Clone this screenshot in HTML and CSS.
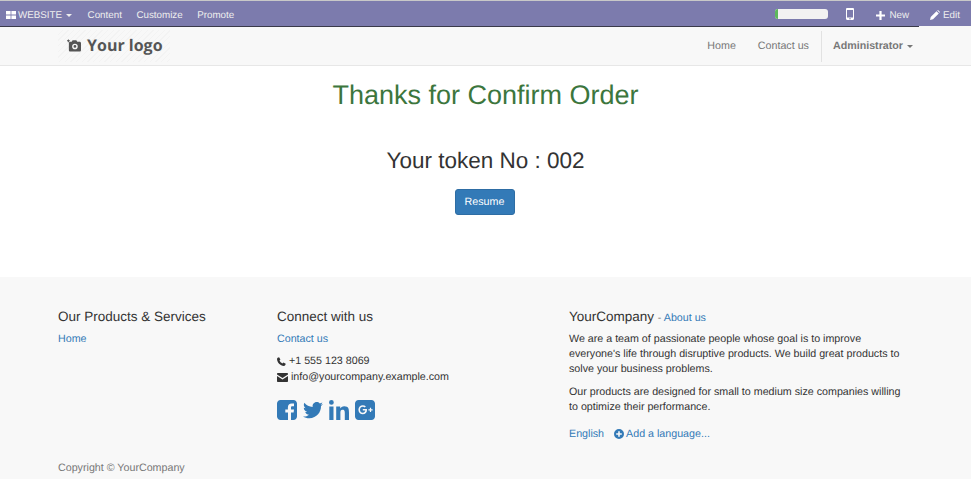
FILE: index.html
```html
<!DOCTYPE html>
<html lang="en">
<head>
<meta charset="utf-8">
<title>Thanks</title>
<link rel="stylesheet" href="styles.css">
</head>
<body>
<header class="adminbar">
  <div class="admin-left">
    <span class="admin-item brand">
      <svg class="grid-ico" viewBox="0 0 10 8" width="10" height="8"><path d="M0 0h4.600v3.600H0zM5.400 0H10v3.600H5.400zM0 4.400h4.600V8H0zM5.400 4.400H10V8H5.400z"/></svg>
      <span>WEBSITE</span> <i class="caret"></i>
    </span>
    <span class="admin-item">Content</span>
    <span class="admin-item">Customize</span>
    <span class="admin-item">Promote</span>
  </div>
  <div class="admin-right">
    <div class="progress"><div class="progress-fill"></div></div>
    <svg class="phone" viewBox="0 0 8 12" width="8" height="12"><path fill-rule="evenodd" d="M1.200 0h5.600C7.500 0 8 .5 8 1.200v9.600c0 .7-.5 1.200-1.200 1.200H1.200C.5 12 0 11.500 0 10.800V1.200C0 .5.500 0 1.200 0zM1 2v7.500h6V2zM4 10a.7.7 0 1 0 0 1.400A.7.7 0 0 0 4 10z"/></svg>
    <span class="admin-action new"><svg viewBox="0 0 9 9" width="9" height="9"><path d="M3.400 0h2.200v3.400H9v2.200H5.600V9H3.400V5.600H0V3.400h3.400z"/></svg>New</span>
    <span class="admin-action edit"><svg viewBox="0 0 10 10" width="10" height="10"><path d="M0 10l.7-3L6.500 1.200l2.300 2.300L3 9.300zM7.200.5 8 0l2 2-.5.800z"/></svg>Edit</span>
  </div>
</header>

<nav class="sitenav">
  <div class="logo">
    <svg class="cam" viewBox="0 0 15 13" width="14" height="13"><path fill-rule="evenodd" d="M5 2.500 6 1h4l1 1.500h2.500c.8 0 1.500.7 1.500 1.500v7.500c0 .8-.7 1.500-1.500 1.500h-10C2.700 13 2 12.300 2 11.500V4c0-.8.700-1.500 1.500-1.500zM8.500 4.500a3 3 0 1 0 0 6 3 3 0 0 0 0-6zM8.500 6a1.500 1.500 0 1 1 0 3 1.500 1.500 0 0 1 0-3z"/><path d="M1 0h1v1h1v1H2v1H1V2H0V1h1z"/></svg>
    <span>Your logo</span>
  </div>
  <div class="nav-right">
    <a class="nav-link">Home</a>
    <a class="nav-link">Contact us</a>
    <a class="nav-user">Administrator <i class="caret"></i></a>
  </div>
</nav>

<main class="content">
  <h1 class="thanks">Thanks for Confirm Order</h1>
  <h2 class="token">Your token No : 002</h2>
  <a class="resume">Resume</a>
</main>

<footer class="footer">
  <div class="columns">
    <section class="col-a">
      <h4 class="foot-title">Our Products &amp; Services</h4>
      <a class="link">Home</a>
    </section>
    <section class="col-b">
      <h4 class="foot-title">Connect with us</h4>
      <a class="link">Contact us</a>
      <ul class="contact">
        <li><svg viewBox="0 0 10 10" width="9" height="9"><path d="M2.300.3 3.800 2.800 2.800 3.900c.5 1.300 1.700 2.500 3.200 3.200l1.100-1 2.600 1.500C9.600 8.900 8.700 10 7.700 10 3.500 9.800.2 6.300 0 2.300 0 1.300 1.100.4 2.300.3z"/></svg>+1 555 123 8069</li>
        <li><svg viewBox="0 0 11 9" width="11" height="9"><path d="M1 0h9c.6 0 1 .4 1 1v.6L5.500 5 0 1.600V1c0-.6.400-1 1-1zM0 3l5.500 3.400L11 3v5c0 .6-.4 1-1 1H1c-.6 0-1-.4-1-1z"/></svg>info@yourcompany.example.com</li>
      </ul>
      <div class="social">
        <svg viewBox="0 0 20 20" width="20" height="20"><path d="M3.500 0h13C18.400 0 20 1.600 20 3.500v13c0 1.900-1.600 3.500-3.500 3.500H14v-7.600h2.600l.4-3H14V7.600c0-.9.300-1.400 1.500-1.400H17V3.500c-.3 0-1.200-.1-2.300-.1-2.300 0-3.800 1.400-3.800 3.900v2.100H8.300v3H11V20H3.500C1.600 20 0 18.400 0 16.500v-13C0 1.600 1.600 0 3.500 0z"/></svg>
        <svg viewBox="0 0 20 17" width="20" height="17"><path d="M20 2c-.7.300-1.500.600-2.400.7.900-.5 1.500-1.300 1.800-2.300-.8.500-1.700.8-2.600 1C16 .5 14.900 0 13.700 0c-2.600 0-4.600 2.400-4 5C6.300 4.800 3.300 3.200 1.400.8.300 2.600.8 5 2.600 6.200 2 6.200 1.300 6 .8 5.700c0 1.900 1.300 3.700 3.300 4.100-.6.200-1.200.2-1.900.1.500 1.600 2 2.800 3.800 2.800C4.300 14.100 2.200 14.700 0 14.500 1.800 15.600 4 16.300 6.300 16.300c7.600 0 11.900-6.400 11.700-12.200.8-.6 1.500-1.300 2-2.100z"/></svg>
        <svg viewBox="0 0 20 20" width="20" height="20"><path d="M.3 6.500h4.200V20H.3zM2.400 0a2.400 2.400 0 1 1 0 4.800 2.400 2.400 0 0 1 0-4.800zM7.200 6.500h4v1.900c.6-1.100 2-2.200 4.100-2.200 4.300 0 4.700 2.800 4.700 6.500V20h-4.200v-6.600c0-1.600 0-3.600-2.200-3.600s-2.200 1.700-2.200 3.500V20H7.200z"/></svg>
        <svg viewBox="0 0 20 20" width="20" height="20"><path fill-rule="evenodd" d="M3.500 0h13C18.400 0 20 1.600 20 3.500v13c0 1.900-1.600 3.500-3.500 3.500h-13C1.600 20 0 18.400 0 16.500v-13C0 1.600 1.600 0 3.500 0zM7.800 5.300C5.300 5.300 3.400 7.300 3.400 9.800s1.900 4.500 4.400 4.500c2.600 0 4.200-1.800 4.200-4.300 0-.4 0-.7-.1-1H7.800v1.500h2.500c-.2 1-1.100 2.300-2.500 2.300-1.600 0-2.800-1.300-2.800-3s1.200-3 2.800-3c.9 0 1.500.4 1.900.8l1.200-1.200c-.8-.7-1.800-1.100-3.100-1.100zM14.900 7.800v1.500h-1.500v1.200h1.500V12h1.200v-1.500h1.500V9.300h-1.500V7.800z"/></svg>
      </div>
    </section>
    <section class="col-c">
      <h4 class="foot-title company">YourCompany <small>- <a class="link">About us</a></small></h4>
      <p>We are a team of passionate people whose goal is to improve everyone's life through disruptive products. We build great products to solve your business problems.</p>
      <p>Our products are designed for small to medium size companies willing to optimize their performance.</p>
      <div class="langs">
        <a class="link">English</a>
        <a class="link add"><svg viewBox="0 0 10 10" width="10" height="10"><path fill-rule="evenodd" d="M5 0a5 5 0 1 1 0 10A5 5 0 0 1 5 0zM4.200 2.200v2H2.200v1.600h2v2h1.600v-2h2V4.200h-2v-2z"/></svg>Add a language...</a>
      </div>
    </section>
  </div>
  <div class="copyright">Copyright © YourCompany</div>
</footer>
</body>
</html>
```
FILE: styles.css
```css
* { box-sizing: border-box; }
html, body { margin: 0; padding: 0; }
body {
  width: 971px;
  height: 479px;
  overflow: hidden;
  font-family: "Liberation Sans", Arial, sans-serif;
  font-size: 10.7px;
  line-height: 15px;
  color: #333;
  background: #fff;
  text-rendering: geometricPrecision;
}
.caret {
  display: inline-block;
  width: 0;
  height: 0;
  vertical-align: middle;
  border-top: 3px solid currentColor;
  border-left: 3.500px solid transparent;
  border-right: 3.500px solid transparent;
}

/* admin bar */
.adminbar {
  height: 27px;
  display: flex;
  justify-content: space-between;
  align-items: center;
  padding-top: 3px;
  background: #7c7bad;
  border-top: 1px solid #c8c8c8;
  border-bottom: 1px solid #3a3a4a;
  color: #eee;
  font-size: 9.800px;
}
.admin-left { display: flex; align-items: center; padding-left: 6px; }
.admin-item { margin-right: 14.500px; }
.brand { display: flex; align-items: center; gap: 2px; margin-right: 15.500px; }
.brand span { margin-right: 2px; }
.grid-ico { fill: #fff; }
.admin-right { display: flex; align-items: center; align-self: stretch; }
.progress {
  width: 53px;
  height: 10px;
  margin-right: 18px;
  margin-bottom: 2px;
  background: #f2f2f2;
  border-radius: 3px;
  overflow: hidden;
}
.progress-fill { width: 3px; height: 100%; background: #5cb85c; }
.phone { fill: #fff; margin-right: 22px; margin-bottom: 2px; }
.admin-action { display: flex; align-items: center; gap: 4px; }
.admin-action svg { fill: #fff; }
.new { margin-right: 10px; }
.edit {
  width: 52px;
  align-self: stretch;
  margin-bottom: -1px;
  padding-left: 11px;
  gap: 3px;
  border-bottom: 1px solid #f8f8f8;
}

/* site nav */
.sitenav {
  height: 39px;
  display: flex;
  justify-content: space-between;
  align-items: center;
  padding: 0 58px 0 0;
  background: #f8f8f8;
  border-bottom: 1px solid #e7e7e7;
}
.logo {
  display: flex;
  align-items: center;
  gap: 6px;
  height: 32px;
  width: 112px;
  margin: 0 0 1px 58px;
  padding-left: 9px;
  color: #555;
  font-family: "Open Sans", sans-serif;
  font-weight: 700;
  font-size: 16px;
  background: repeating-linear-gradient(135deg, #f8f8f8 0 3px, #f3f3f3 3px 4px);
}
.cam { fill: #555; }
.nav-right { display: flex; align-items: center; height: 100%; color: #777; }
.nav-link { margin-right: 22px; }
.nav-link + .nav-link { margin-right: 12px; }
.nav-user { display: flex; align-items: center; gap: 4px; height: 31px; padding-left: 11px; border-left: 1px solid #e2e2e2; font-weight: 700; }

/* main */
.content { height: 211px; display: flex; flex-direction: column; align-items: center; }
.thanks { margin: 13px 0 0; font-size: 27px; line-height: 32px; font-weight: 400; color: #3c763d; }
.token { margin: 37px 0 0; font-size: 22.500px; line-height: 26px; font-weight: 400; color: #333; }
.resume {
  margin-top: 15px;
  margin-right: 2px;
  width: 60px;
  height: 26px;
  display: flex;
  align-items: center;
  justify-content: center;
  background: #337ab7;
  border: 1px solid #2e6da4;
  border-radius: 3px;
  color: #fff;
}

/* footer */
.footer { height: 202px; padding: 32px 58px 0; background: #f8f8f8; }
.columns { display: grid; grid-template-columns: 219px 292px 336px; height: 152px; }
.foot-title { margin: 0 0 7px; font-size: 13.500px; line-height: 16px; font-weight: 400; color: #333; }
.link { color: #337ab7; }
.contact { list-style: none; margin: 7px 0 0; padding: 0; }
.contact li { display: flex; align-items: center; gap: 3px; height: 15.500px; }
.contact svg { fill: #333; }
.social { display: flex; align-items: center; gap: 6px; margin-top: 15px; }
.social svg { fill: #337ab7; }
.company { margin-bottom: 6px; }
.company small { font-size: 10.700px; color: #777; }
.col-c p { margin: 0 0 8px; }
.langs { display: flex; gap: 10px; margin-top: 12px; }
.add { display: flex; align-items: center; gap: 2px; }
.add svg { fill: #337ab7; margin-bottom: 1px; }
.copyright { color: #777; }
```
